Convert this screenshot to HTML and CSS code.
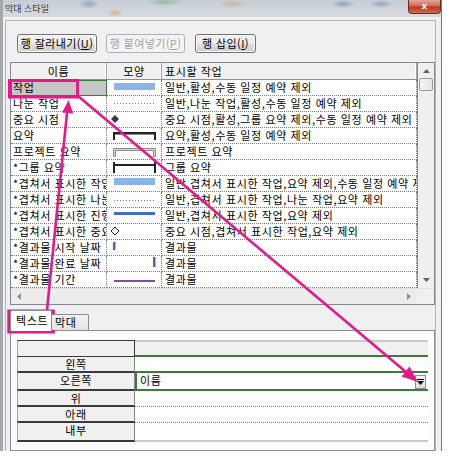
FILE: index.html
```html
<!DOCTYPE html>
<html lang="ko">
<head>
<meta charset="utf-8">
<title>막대 스타일</title>
<link rel="stylesheet" href="styles.css">
</head>
<body>
<div class="window">
  <div class="titlebar">
    <span class="title">막대 스타일</span>
    <span class="close">x</span>
  </div>
  <div class="client">
   <div class="frame">
    <div class="toolbar">
      <button class="btn w80">행 잘라내기(<u>U</u>)</button>
      <button class="btn w79 disabled">행 붙여넣기(<u>P</u>)</button>
      <button class="btn w61">행 삽입(<u>I</u>)</button>
    </div>

    <div class="grid">
      <div class="grid-main">
        <div class="rows">
          <div class="row head">
            <div class="h center">이름</div>
            <div class="h center">모양</div>
            <div class="h">표시할 작업</div>
          </div>
          <div class="row">
            <div class="c name selcell">작업</div>
            <div class="c shape"><svg width="54" height="15" viewBox="0 0 54 15"><rect x="7" y="3" width="41" height="7" fill="#8db4e5"/></svg></div>
            <div class="c task">일반,활성,수동 일정 예약 제외</div>
          </div>
          <div class="row">
            <div class="c name">나눈 작업</div>
            <div class="c shape"><svg width="54" height="15" viewBox="0 0 54 15"><line x1="7" y1="7.5" x2="48" y2="7.5" stroke="#4a7ec8" stroke-width="1" stroke-dasharray="1 2"/></svg></div>
            <div class="c task">일반,나눈 작업,활성,수동 일정 예약 제외</div>
          </div>
          <div class="row">
            <div class="c name">중요 시점</div>
            <div class="c shape"><svg width="54" height="15" viewBox="0 0 54 15"><polygon points="8,3 12,7 8,11 4,7" fill="#3a3a3a"/></svg></div>
            <div class="c task">중요 시점,활성,그룹 요약 제외,수동 일정 예약 제외</div>
          </div>
          <div class="row">
            <div class="c name">요약</div>
            <div class="c shape"><svg width="54" height="15" viewBox="0 0 54 15"><path d="M6 12 V4 H49 V12 H47 V6.5 H8 V12 Z" fill="#222"/></svg></div>
            <div class="c task">요약,활성,수동 일정 예약 제외</div>
          </div>
          <div class="row">
            <div class="c name">프로젝트 요약</div>
            <div class="c shape"><svg width="54" height="15" viewBox="0 0 54 15"><path d="M6.5 12.5 V4.5 H48.5 V12.5 H46.5 V6.5 H8.5 V12.5 Z" fill="#d4d4d4" stroke="#8f8f8f" stroke-width="1"/></svg></div>
            <div class="c task">프로젝트 요약</div>
          </div>
          <div class="row">
            <div class="c name">*그룹 요약</div>
            <div class="c shape"><svg width="54" height="15" viewBox="0 0 54 15"><rect x="6" y="2" width="2" height="11" fill="#222"/><rect x="47" y="2" width="2" height="11" fill="#222"/><rect x="6" y="4" width="43" height="2" fill="#222"/></svg></div>
            <div class="c task">그룹 요약</div>
          </div>
          <div class="row">
            <div class="c name">*겹쳐서 표시한 작업</div>
            <div class="c shape"><svg width="54" height="15" viewBox="0 0 54 15"><rect x="7" y="2" width="41" height="7" fill="#8db4e5"/></svg></div>
            <div class="c task">일반,겹쳐서 표시한 작업,요약 제외,수동 일정 예약 제외</div>
          </div>
          <div class="row">
            <div class="c name">*겹쳐서 표시한 나눈 작업</div>
            <div class="c shape"><svg width="54" height="15" viewBox="0 0 54 15"><line x1="7" y1="8.5" x2="48" y2="8.5" stroke="#4a7ec8" stroke-width="1" stroke-dasharray="1 2"/></svg></div>
            <div class="c task">일반,겹쳐서 표시한 작업,나눈 작업,요약 제외</div>
          </div>
          <div class="row">
            <div class="c name">*겹쳐서 표시한 진행률</div>
            <div class="c shape"><svg width="54" height="15" viewBox="0 0 54 15"><rect x="7" y="4" width="41" height="3" fill="#3b6fc2"/></svg></div>
            <div class="c task">일반,겹쳐서 표시한 작업,요약 제외</div>
          </div>
          <div class="row">
            <div class="c name">*겹쳐서 표시한 중요 시점</div>
            <div class="c shape"><svg width="54" height="15" viewBox="0 0 54 15"><polygon points="8,3 12,7 8,11 4,7" fill="#fff" stroke="#222" stroke-width="1"/></svg></div>
            <div class="c task">중요 시점,겹쳐서 표시한 작업,요약 제외</div>
          </div>
          <div class="row">
            <div class="c name">*결과물 시작 날짜</div>
            <div class="c shape"><svg width="54" height="15" viewBox="0 0 54 15"><rect x="6" y="2" width="2.5" height="8" fill="#7a4fa6"/></svg></div>
            <div class="c task">결과물</div>
          </div>
          <div class="row">
            <div class="c name">*결과물 완료 날짜</div>
            <div class="c shape"><svg width="54" height="15" viewBox="0 0 54 15"><rect x="46" y="1" width="2.5" height="10" fill="#7a4fa6"/></svg></div>
            <div class="c task">결과물</div>
          </div>
          <div class="row">
            <div class="c name">*결과물 기간</div>
            <div class="c shape"><svg width="54" height="15" viewBox="0 0 54 15"><rect x="7" y="8" width="41" height="2" fill="#7a4fa6"/></svg></div>
            <div class="c task">결과물</div>
          </div>
        </div>
        <div class="vscroll">
          <div class="sb-btn"><svg width="7" height="4" viewBox="0 0 7 4"><polygon points="3.5,0 7,4 0,4" fill="#606060"/></svg></div>
          <div class="thumb"></div>
          <div class="sb-track"></div>
          <div class="sb-btn"><svg width="7" height="4" viewBox="0 0 7 4"><polygon points="0,0 7,0 3.5,4" fill="#606060"/></svg></div>
        </div>
      </div>
      <div class="hscroll">
        <div class="htrack">
          <div class="hb-btn"><svg width="4" height="7" viewBox="0 0 4 7"><polygon points="0,3.5 4,0 4,7" fill="#909090"/></svg></div>
          <div class="hb-btn"><svg width="4" height="7" viewBox="0 0 4 7"><polygon points="0,0 4,3.5 0,7" fill="#909090"/></svg></div>
        </div>
        <div class="corner"></div>
      </div>
    </div>

    <div class="tabs">
      <div class="tab active">텍스트</div>
      <div class="tab">막대</div>
    </div>
    <div class="panel">
      <div class="props">
        <div class="lab lab-head"></div>
        <div class="val v-head"></div>
        <div class="lab">왼쪽</div>
        <div class="val v-left"></div>
        <div class="lab">오른쪽</div>
        <div class="val v-right"><span>이름</span><span class="drop"><svg width="7" height="6" viewBox="0 0 7 6"><rect x="0" y="0" width="7" height="1" fill="#000"/><polygon points="0,2 7,2 3.5,6" fill="#000"/></svg></span></div>
        <div class="lab">위</div>
        <div class="val v-dot"></div>
        <div class="lab">아래</div>
        <div class="val v-dot"></div>
        <div class="lab">내부</div>
        <div class="val v-last"></div>
      </div>
    </div>
   </div>
  </div>
</div>

<svg class="overlay" width="459" height="467" viewBox="0 0 459 467">
  <g fill="none" stroke="#e5198a">
    <rect x="9.5" y="80.5" width="68" height="16.5" stroke-width="3"/>
    <rect x="8.8" y="311" width="44.5" height="21" stroke-width="3"/>
    <line x1="47" y1="310" x2="67.5" y2="108" stroke-width="2.6"/>
    <line x1="78" y1="96" x2="406" y2="372" stroke-width="2.6"/>
  </g>
  <g fill="#e5198a">
    <polygon points="68.5,100 73.2,113.4 62.2,112.4"/>
    <polygon points="418,382 401.6,376.6 409.4,366.6"/>
  </g>
</svg>
</body>
</html>
```

FILE: styles.css
```css
* { box-sizing: border-box; }

html, body {
  margin: 0;
  padding: 0;
  background: #ffffff;
}

body {
  width: 459px;
  height: 467px;
  position: relative;
  overflow: hidden;
  font-family: "Noto Sans CJK KR", "Noto Sans", sans-serif;
  font-size: 11px;
  letter-spacing: 0.6px;
  color: #000;
}

.window {
  width: 442px;
  height: 451px;
  background: #f0f0f0;
  border-left: 3px solid #a3a8ad;
  border-right: 1px solid #7a7a7a;
  display: flex;
  flex-direction: column;
}

.titlebar {
  height: 17px;
  flex: none;
  display: flex;
  justify-content: space-between;
  align-items: flex-start;
  background:
    radial-gradient(ellipse 10px 5px at 86px 4px, rgba(90,120,170,0.45), transparent),
    radial-gradient(ellipse 8px 4px at 112px 13px, rgba(220,140,60,0.5), transparent),
    radial-gradient(ellipse 18px 4px at 162px 2px, rgba(90,160,90,0.45), transparent),
    radial-gradient(ellipse 14px 4px at 230px 4px, rgba(200,150,80,0.45), transparent),
    radial-gradient(ellipse 12px 4px at 340px 4px, rgba(80,110,160,0.45), transparent),
    radial-gradient(ellipse 12px 4px at 378px 4px, rgba(80,110,160,0.45), transparent),
    linear-gradient(#c5ccd3, #d7dce1);
}

.title {
  font-size: 9px;
  line-height: 11px;
  padding: 3px 0 0 2px;
  color: #3a3a3a;
  letter-spacing: 0;
}

.close {
  width: 33px;
  height: 14px;
  border: 1px solid #6a2b22;
  border-top: none;
  border-radius: 0 0 4px 4px;
  background: linear-gradient(#e6a596, #d06a56 45%, #b8391f 55%, #cf6b4f);
  color: #fff;
  font-family: "DejaVu Sans", sans-serif;
  font-weight: bold;
  font-size: 9px;
  line-height: 12px;
  letter-spacing: 0;
  text-align: center;
}

.client {
  flex: 1;
  padding: 3px 0 0 2px;
  display: flex;
  flex-direction: column;
}

.frame {
  flex: 1;
  width: 431px;
  border: 1px solid #b4b4b4;
  border-bottom: none;
  display: flex;
  flex-direction: column;
}

.toolbar {
  height: 41px;
  flex: none;
  display: flex;
  gap: 9px;
  padding: 13px 0 0 11px;
}

.btn {
  height: 19px;
  padding: 0;
  border: 1px solid #707070;
  border-radius: 3px;
  background: linear-gradient(#f2f2f2, #ebebeb 50%, #dddddd 51%, #cfcfcf);
  font-family: "Noto Sans CJK KR", sans-serif;
  font-size: 11px;
  letter-spacing: 0.4px;
  line-height: 15px;
  color: #000;
  box-shadow: inset 0 0 0 1px #fcfcfc;
  white-space: nowrap;
}
.btn u { text-decoration: underline; }
.w80 { width: 80px; }
.w79 { width: 79px; }
.w61 { width: 61px; margin-left: 1px; }
.btn.disabled {
  border-color: #adb2b5;
  background: #f4f4f4;
  color: #a3a3a3;
  box-shadow: none;
}

.grid {
  margin-left: 4px;
  width: 425px;
  flex: none;
  border: 1px solid #828790;
  background: #fff;
}

.grid-main {
  display: flex;
  height: 225px;
}

.rows {
  width: 406px;
  overflow: hidden;
}

.row {
  display: grid;
  grid-template-columns: 96px 55px 255px;
  height: 16px;
}

.row.head {
  height: 17px;
  background: #f0f0f0;
  border-bottom: 1px solid #8e8f8f;
}

.h {
  line-height: 16px;
  padding-left: 3px;
  border-right: 1px solid #a5a5a5;
  box-shadow: inset -1px 0 0 #ffffff;
  white-space: nowrap;
}
.h.center { text-align: center; padding-left: 0; }

.c {
  border-right: 1px dotted #7a7a7a;
  border-bottom: 1px dotted #7a7a7a;
  line-height: 15px;
  white-space: nowrap;
  overflow: hidden;
}
.c.name { padding-left: 2px; }
.c.task { padding-left: 3px; }
.c.shape svg { display: block; }

.selcell {
  background: #c6c6c6;
  outline: 1px solid #3b7b3b;
  outline-offset: -1px;
}

.vscroll {
  width: 17px;
  display: flex;
  flex-direction: column;
  background: #efefef;
  border-left: 1px solid #8a8a8a;
}
.sb-btn {
  height: 16px;
  display: flex;
  align-items: center;
  justify-content: center;
  flex: none;
}
.thumb {
  height: 13px;
  margin: -1px 1px 0;
  border: 1px solid #9a9a9a;
  border-radius: 2px;
  background: linear-gradient(90deg, #f4f4f4, #e6e6e6);
  flex: none;
}
.sb-track { flex: 1; }

.hscroll {
  display: flex;
  height: 16px;
  border-top: 1px solid #e0e0e0;
}
.htrack {
  width: 406px;
  background: #ececec;
  display: flex;
  justify-content: space-between;
  align-items: center;
  padding: 0 3px;
}
.hb-btn {
  width: 10px;
  display: flex;
  justify-content: center;
}
.corner {
  width: 17px;
  background: #f0f0f0;
}

.tabs {
  height: 25px;
  flex: none;
  margin-left: 4px;
  display: flex;
  align-items: flex-end;
  position: relative;
  z-index: 1;
}
.tab {
  height: 16px;
  width: 37px;
  border: 1px solid #898c95;
  border-left: none;
  border-bottom: none;
  background: linear-gradient(#f3f3f3, #e3e3e3);
  line-height: 15px;
  padding-left: 3px;
  border-radius: 0 2px 0 0;
}
.tab.active {
  height: 21px;
  width: 42px;
  border-left: 1px solid #898c95;
  background: #fcfcfc;
  margin-bottom: -1px;
  line-height: 19px;
  padding-left: 5px;
  border-radius: 2px 2px 0 0;
}

.panel {
  margin-left: 4px;
  width: 425px;
  height: 121px;
  flex: none;
  border: 1px solid #898c95;
  background: #fcfcfc;
  padding: 9px 0 0 6px;
}

.props {
  width: 411px;
  display: grid;
  grid-template-columns: 118px 293px;
  grid-template-rows: 17px 16px 18px 16px 16px 19px;
}

.lab {
  background: #f0f0f0;
  border-left: 1px solid #a0a0a0;
  border-right: 1px solid #8a8a8a;
  border-bottom: 2px solid #3a3a3a;
  text-align: center;
  line-height: 14px;
}
.lab-head {
  border-top: 1px solid #3a3a3a;
  border-right-color: #3a3a3a;
  border-bottom-width: 1px;
}

.val {
  background: #fff;
  line-height: 15px;
}
.v-head {
  background: #f0f0f0;
  border-top: 2px solid #c9c9c9;
  border-bottom: 2px solid #3b7b3b;
}
.v-left {
  border-bottom: 2px solid #3b7b3b;
}
.v-right {
  border-left: 2px solid #3b7b3b;
  border-bottom: 2px solid #3b7b3b;
  display: flex;
  justify-content: space-between;
  align-items: flex-start;
  padding: 0 2px 0 3px;
}
.drop {
  width: 11px;
  height: 14px;
  margin-top: 2px;
  border: 1px solid #8c8c8c;
  background: linear-gradient(#f4f4f4, #dcdcdc);
  display: flex;
  align-items: center;
  justify-content: center;
}
.drop svg { display: block; }
.v-dot {
  border-bottom: 1px dotted #7a7a7a;
}
.v-last {
  border-bottom: 2px solid #cacaca;
}

.overlay {
  position: absolute;
  left: 0;
  top: 0;
  pointer-events: none;
}
```
